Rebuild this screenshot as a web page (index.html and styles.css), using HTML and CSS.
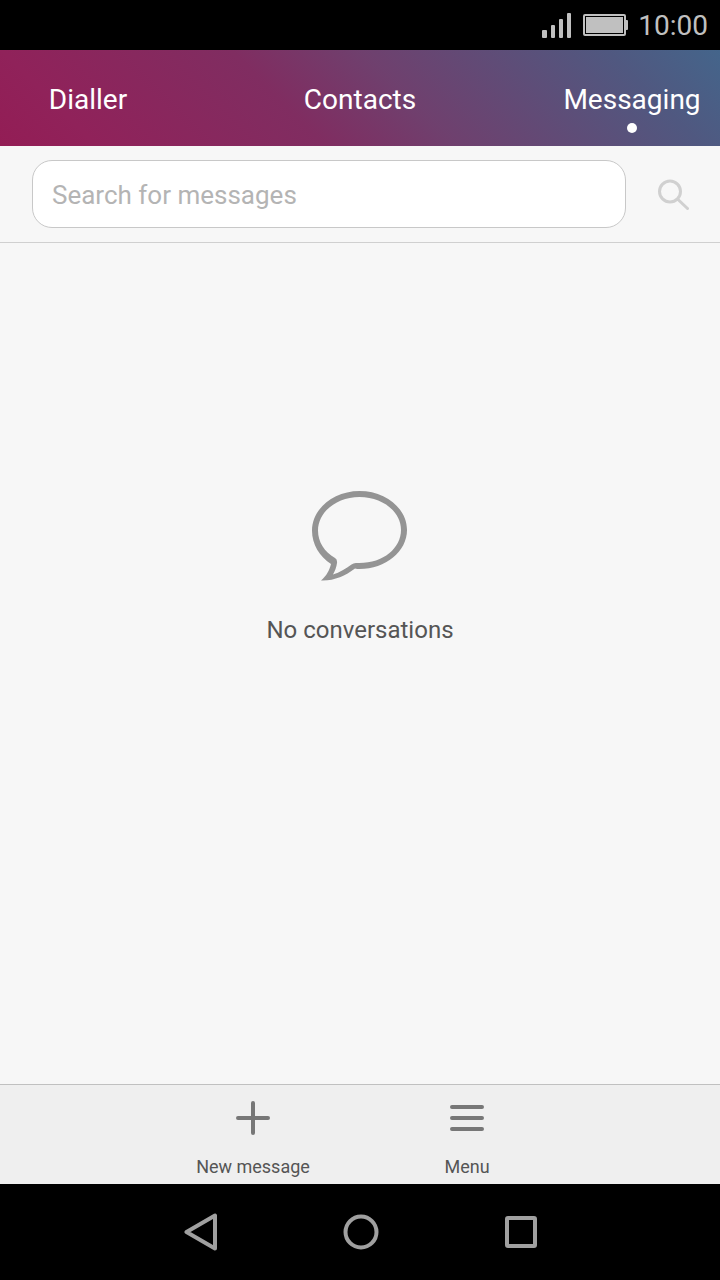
FILE: index.html
```html
<!DOCTYPE html>
<html lang="en">
<head>
<meta charset="utf-8">
<meta name="viewport" content="width=device-width, initial-scale=1">
<title>Messaging</title>
<link rel="stylesheet" href="styles.css">
</head>
<body>
<div class="screen">
  <div class="status">
    <svg class="signal" width="30" height="26" viewBox="0 0 30 26" role="img" aria-label="Signal strength">
      <rect x="0" y="18" width="5" height="8" rx="1"/>
      <rect x="9" y="13" width="4" height="13" rx="1"/>
      <rect x="17" y="7" width="4" height="19" rx="1"/>
      <rect x="25" y="1" width="4" height="25" rx="1"/>
    </svg>
    <svg class="battery" width="45" height="22" viewBox="0 0 45 22" role="img" aria-label="Battery full">
      <rect x="1" y="1" width="41" height="20" rx="1" fill="none" stroke="#c0c0c0" stroke-width="2"/>
      <rect x="3" y="3" width="37" height="16"/>
      <rect x="42" y="6" width="3" height="10" rx="1"/>
    </svg>
    <time class="clock">10:00</time>
  </div>

  <nav class="tabs">
    <a class="tab" href="#dialler">Dialler</a>
    <a class="tab" href="#contacts">Contacts</a>
    <a class="tab active" href="#messaging" aria-current="page">Messaging</a>
  </nav>

  <form class="search">
    <input class="field" type="search" placeholder="Search for messages" aria-label="Search for messages">
    <button class="find" type="button" aria-label="Search">
      <svg width="32" height="32" viewBox="0 0 32 32" fill="none" stroke="#d0d0d0" stroke-width="3" stroke-linecap="round">
        <circle cx="13" cy="13.500" r="10.500"/>
        <path d="M21 21.500 30.500 30.500"/>
      </svg>
    </button>
  </form>

  <main class="empty">
    <svg width="96" height="92" viewBox="0 0 96 92" fill="#949494" aria-hidden="true">
      <path fill-rule="evenodd" d="M47.500 1C73.700 1 95 18.500 95 40S73.700 79 47.500 79C46 79 44.500 79 43 78.500C33 86 22 91 9 90.500C14.500 86 17.500 80 19 74C7.500 66.500 0 54.500 0 40.500C0 19 21.300 1 47.500 1ZM47.500 7C24.600 7 6 22 6 40.500C6 52 12.500 62 23 68Q25.500 69.500 25 73C24.500 77 23 81 21 84.500C27.500 82.500 34 78.500 39.500 74.500Q42 72.500 45 73C70.400 74 89 58.500 89 40S70.400 7 47.500 7Z"/>
    </svg>
    <p class="note">No conversations</p>
  </main>

  <div class="toolbar">
    <button class="action" type="button">
      <svg width="34" height="34" viewBox="0 0 34 34" stroke="#777" stroke-width="4" stroke-linecap="round" aria-hidden="true">
        <path d="M17 2V32M2 17H32"/>
      </svg>
      <span>New message</span>
    </button>
    <button class="action" type="button">
      <svg width="34" height="34" viewBox="0 0 34 34" stroke="#777" stroke-width="4" stroke-linecap="round" aria-hidden="true">
        <path d="M2 6H32M2 17H32M2 28H32"/>
      </svg>
      <span>Menu</span>
    </button>
  </div>

  <div class="system">
    <button class="key" type="button" aria-label="Back">
      <svg width="38" height="38" viewBox="0 0 38 38" fill="none" stroke="#a0a0a0" stroke-width="4" stroke-linejoin="round">
        <path d="M34 2.500V35.500L5.500 19Z"/>
      </svg>
    </button>
    <button class="key" type="button" aria-label="Home">
      <svg width="38" height="38" viewBox="0 0 38 38" fill="none" stroke="#a0a0a0" stroke-width="4">
        <circle cx="20" cy="19" r="15.500"/>
      </svg>
    </button>
    <button class="key" type="button" aria-label="Recent apps">
      <svg width="38" height="38" viewBox="0 0 38 38" fill="none" stroke="#a0a0a0" stroke-width="4">
        <rect x="6" y="5" width="28" height="28" rx="1"/>
      </svg>
    </button>
  </div>
</div>
</body>
</html>
```

FILE: styles.css
```css
* {
  box-sizing: border-box;
}

body {
  margin: 0;
  font-family: Roboto, "Liberation Sans", sans-serif;
  color: #555;
}

svg {
  display: block;
}

button {
  padding: 0;
  border: 0;
  background: none;
  font: inherit;
  color: inherit;
  cursor: pointer;
}

.screen {
  display: flex;
  flex-direction: column;
  min-height: 100vh;
  background: #f7f7f7;
}

.status {
  display: flex;
  align-items: center;
  justify-content: flex-end;
  height: 50px;
  padding-right: 12px;
  background: #000;
  color: #c0c0c0;
  fill: #c0c0c0;
}

.signal {
  margin-right: 11px;
}

.battery {
  margin-right: 10px;
}

.clock {
  padding-top: 2px;
  font-size: 28px;
  line-height: 32px;
}

.tabs {
  display: grid;
  grid-template-columns: 176px 1fr 176px;
  height: 96px;
  background: linear-gradient(45deg, #931d55 0%, #90225a 12%, #802d61 40%, #6f406e 56%, #505880 86%, #44658b 100%);
}

.tab {
  position: relative;
  display: flex;
  align-items: center;
  justify-content: center;
  padding-top: 3px;
  font-size: 28px;
  line-height: 32px;
  color: #fff;
  text-decoration: none;
}

.active::after {
  content: "";
  position: absolute;
  bottom: 13px;
  left: 50%;
  width: 10px;
  height: 10px;
  margin-left: -5px;
  border-radius: 50%;
  background: #fff;
}

.search {
  display: flex;
  align-items: center;
  padding: 14px 0 14px 32px;
  border-bottom: 1px solid #d0d0d0;
}

.field {
  flex: 1;
  min-width: 0;
  height: 68px;
  padding: 2px 19px 0;
  border: 1px solid #c8c8c8;
  border-radius: 20px;
  outline: 0;
  appearance: none;
  background: #fff;
  font: inherit;
  font-size: 26px;
  color: #333;
}

.field::placeholder {
  color: #b4b4b4;
  opacity: 1;
}

.find {
  display: grid;
  place-items: center;
  width: 94px;
  height: 68px;
}

.empty {
  display: flex;
  flex: 1;
  flex-direction: column;
  align-items: center;
  justify-content: center;
  padding-bottom: 192px;
}

.note {
  margin: 32px 0 0;
  font-size: 24px;
  line-height: 32px;
}

.toolbar {
  display: flex;
  justify-content: center;
  height: 100px;
  border-top: 1px solid #c0c0c0;
  background: #efefef;
}

.action {
  display: flex;
  flex-direction: column;
  align-items: center;
  gap: 20px;
  width: 214px;
  padding-top: 16px;
  font-size: 18px;
  line-height: 24px;
}

.system {
  display: flex;
  justify-content: center;
  height: 96px;
  background: #000;
}

.key {
  display: grid;
  place-items: center;
  width: 160px;
}
```
